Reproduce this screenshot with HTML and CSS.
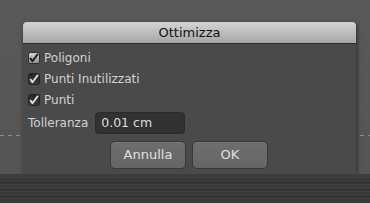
FILE: index.html
```html
<!DOCTYPE html>
<html>
<head>
<meta charset="utf-8">
<link rel="stylesheet" href="styles.css">
</head>
<body>
<div class="stage">
  <div class="dialog">
    <div class="titlebar">Ottimizza</div>
    <div class="content">
      <label class="row">
        <svg class="cb cb-light" width="12" height="12" viewBox="0 0 12 12"><defs><linearGradient id="gl" x1="0" y1="0" x2="0" y2="1"><stop offset="0" stop-color="#d6d6d6"/><stop offset="1" stop-color="#8e8e8e"/></linearGradient></defs><rect x="0.5" y="0.5" width="11" height="11" rx="2" fill="url(#gl)" stroke="#2a2a2a"/><path d="M2.6 6.6 L4.4 9.3 L9.6 2.4" fill="none" stroke="#1c1c1c" stroke-width="1.9" stroke-linecap="round" stroke-linejoin="round"/></svg>
        <span>Poligoni</span>
      </label>
      <label class="row">
        <svg class="cb" width="12" height="12" viewBox="0 0 12 12"><defs><linearGradient id="gd" x1="0" y1="0" x2="0" y2="1"><stop offset="0" stop-color="#252525"/><stop offset="1" stop-color="#3c3c3c"/></linearGradient></defs><rect x="0.5" y="0.5" width="11" height="11" rx="2" fill="url(#gd)" stroke="#242424"/><path d="M2.6 6.6 L4.4 9.3 L9.6 2.4" fill="none" stroke="#e2e2e2" stroke-width="1.8" stroke-linecap="round" stroke-linejoin="round"/></svg>
        <span>Punti Inutilizzati</span>
      </label>
      <label class="row">
        <svg class="cb" width="12" height="12" viewBox="0 0 12 12"><rect x="0.5" y="0.5" width="11" height="11" rx="2" fill="url(#gd)" stroke="#242424"/><path d="M2.6 6.6 L4.4 9.3 L9.6 2.4" fill="none" stroke="#e2e2e2" stroke-width="1.8" stroke-linecap="round" stroke-linejoin="round"/></svg>
        <span>Punti</span>
      </label>
      <div class="field">
        <span class="field-label">Tolleranza</span>
        <div class="input">0.01 cm</div>
      </div>
      <div class="buttons">
        <div class="btn">Annulla</div>
        <div class="btn">OK</div>
      </div>
    </div>
  </div>
</div>
<div class="floor"></div>
</body>
</html>
```

FILE: styles.css
```css
html, body {
  margin: 0;
  padding: 0;
}
body {
  width: 370px;
  height: 203px;
  overflow: hidden;
  background: #565656;
  font-family: "DejaVu Sans", "Liberation Sans", sans-serif;
}
.stage {
  height: 174px;
  padding-top: 22px;
  padding-left: 23px;
  box-sizing: border-box;
  background:
    repeating-linear-gradient(90deg, #8c8c8c 0 4px, transparent 4px 8px) 0 135px / 100% 1px no-repeat,
    linear-gradient(180deg, #595959 0, #555555 100%);
}
.dialog {
  width: 333px;
  height: 152px;
  border-radius: 4px 4px 0 0;
  background: #4a4a4a;
  box-shadow: 1px 2px 4px rgba(0, 0, 0, 0.55);
  display: flex;
  flex-direction: column;
}
.titlebar {
  height: 21px;
  border-radius: 4px 4px 0 0;
  background: linear-gradient(180deg, #d4d4d4 0%, #bdbdbd 50%, #a7a7a7 100%);
  border-bottom: 1px solid #2c2c2c;
  color: #111;
  font-size: 13px;
  line-height: 21px;
  text-align: center;
}
.content {
  padding: 3px 5px 5px 5px;
  display: flex;
  flex-direction: column;
  color: #d2d2d2;
  font-size: 12px;
}
.row {
  height: 21px;
  display: flex;
  align-items: center;
  gap: 4px;
}
.cb {
  display: block;
  flex: none;
}
.field {
  margin-top: 2px;
  height: 22px;
  display: flex;
  align-items: center;
  gap: 7px;
}
.input {
  width: 90px;
  height: 22px;
  box-sizing: border-box;
  border-radius: 4px;
  background: #323232;
  border: 1px solid #2a2a2a;
  color: #dedede;
  padding-left: 5px;
  line-height: 20px;
  font-size: 12.5px;
}
.buttons {
  margin-top: 7px;
  display: flex;
  justify-content: flex-start;
  gap: 6px;
  padding-left: 82px;
}
.btn {
  width: 76px;
  height: 28px;
  box-sizing: border-box;
  border-radius: 5px;
  border: 1px solid #383838;
  background: linear-gradient(180deg, #6e6e6e 0%, #656565 100%);
  box-shadow: inset 0 1px 0 rgba(255, 255, 255, 0.08);
  color: #e0e0e0;
  font-size: 13px;
  line-height: 26px;
  text-align: center;
}
.floor {
  height: 29px;
  background:
    linear-gradient(180deg, #3d3d3d 0, #3d3d3d 5px, #2f2f2f 5px, #2f2f2f 6px, transparent 6px),
    repeating-linear-gradient(180deg, #363636 0 3px, #424242 3px 4px, #383838 4px 6px, #404040 6px 7px);
}
```
